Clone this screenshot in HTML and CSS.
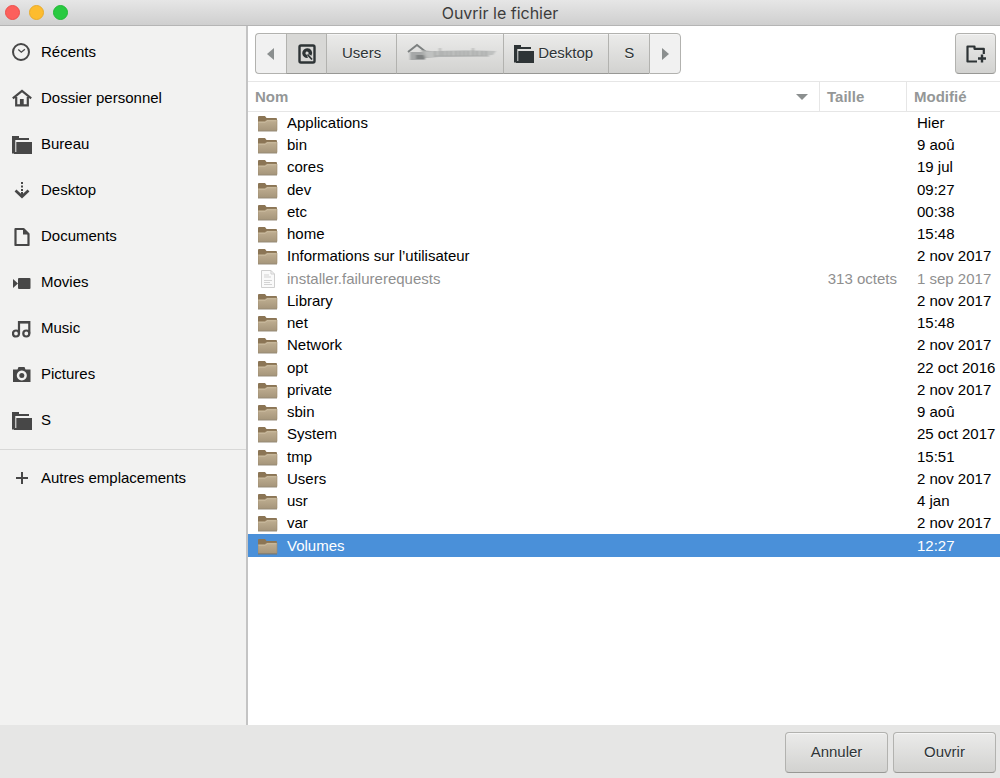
FILE: index.html
```html
<!DOCTYPE html>
<html lang="fr">
<head>
  <meta charset="UTF-8" />
  <meta name="viewport" content="width=device-width, initial-scale=1" />
  <title>Ouvrir le fichier</title>
  <link rel="stylesheet" href="styles.css">
</head>
<body>
  <svg class="sprite" aria-hidden="true">
    <defs>
      <linearGradient id="tan" x1="0" y1="0" x2="0" y2="1">
        <stop offset="0" stop-color="#c0af92" />
        <stop offset="1" stop-color="#a6967b" />
      </linearGradient>
      <filter id="smear" x="-10%" y="-20%" width="120%" height="140%">
        <feGaussianBlur stdDeviation="1 0.6" />
      </filter>
    </defs>
    <symbol id="i-clock" viewBox="0 0 20 20">
      <circle cx="9" cy="10" r="8" fill="none" stroke="currentColor" stroke-width="2" />
      <path d="M6.3 7.6l3 2.6 3.6-3" fill="none" stroke="currentColor" stroke-width="1.3" />
    </symbol>
    <symbol id="i-home" viewBox="0 0 20 20">
      <path d="M.8 10.4L10 3l9.200 7.400M4.200 9v8.300h11.600V9" fill="none" stroke="currentColor" stroke-width="2.200" />
      <path d="M7.900 11h3.800v6H7.900z" fill="currentColor" />
    </symbol>
    <symbol id="i-folder" viewBox="0 0 20 20">
      <path d="M0 2h7v2h10v2H3.300v13.500H0z" fill="currentColor" />
      <path d="M4.300 8H20v12H2v-2h2.300z" fill="currentColor" />
    </symbol>
    <symbol id="i-down" viewBox="0 0 20 20">
      <path d="M9 2h2v2H9zM9 5.500h2v2H9zM9 9h2v2H9z" fill="currentColor" />
      <path d="M3.500 10.600l6.500 6 6.500-6" fill="none" stroke="currentColor" stroke-width="2.700" />
      <path d="M9 12h2v4H9z" fill="currentColor" />
    </symbol>
    <symbol id="i-doc" viewBox="0 0 20 20">
      <path d="M3.500 3h8l5 5v11h-13z" fill="none" stroke="currentColor" stroke-width="2.200" stroke-linejoin="round" />
      <path d="M11 3v5.500h5.500z" fill="currentColor" />
    </symbol>
    <symbol id="i-movie" viewBox="0 0 20 20">
      <rect x="6" y="6" width="12.500" height="11" rx="1" fill="currentColor" />
      <path d="M1 7l5 4.500L1 16z" fill="currentColor" />
    </symbol>
    <symbol id="i-music" viewBox="0 0 20 20">
      <g fill="none" stroke="currentColor" stroke-width="2.200">
        <circle cx="4" cy="15.500" r="3" />
        <circle cx="14.300" cy="15.500" r="3" />
        <path d="M7 15.500V4h10.300v11.500" />
        <path d="M7 4.500h10.300" />
      </g>
    </symbol>
    <symbol id="i-camera" viewBox="0 0 20 20">
      <path fill-rule="evenodd" d="M1 5.500h4.500l1-2.500h6l1 2.500H18.500V18H1zM9.800 6.500a5 5 0 1 0 .01 0z" fill="currentColor" />
      <circle cx="9.800" cy="11.500" r="2.500" fill="currentColor" />
    </symbol>
    <symbol id="i-plus" viewBox="0 0 20 20">
      <path d="M10 4v12M4 10h12" stroke="currentColor" stroke-width="2" />
    </symbol>
    <symbol id="i-disk" viewBox="0 0 20 20">
      <rect x="2.500" y="1.500" width="15" height="17" rx="1.500" fill="none" stroke="currentColor" stroke-width="2.400" />
      <path d="M10 4.300a4.800 4.800 0 1 0 1 9.500l-1.300-3a1.600 1.600 0 1 1 1.700-.7l3 1.700A4.800 4.800 0 0 0 10 4.300z" fill="currentColor" />
      <path d="M10.500 10.500l4.500 5" stroke="currentColor" stroke-width="1.800" />
    </symbol>
    <symbol id="i-newfolder" viewBox="0 0 20 20">
      <path d="M11 17.500H1.500V2.500h7v2.300h9.300V10" fill="none" stroke="currentColor" stroke-width="2.200" stroke-linejoin="round" />
      <path d="M16 10.500v8M12 14.500h8" stroke="currentColor" stroke-width="2.400" />
    </symbol>
    <symbol id="i-dir" viewBox="0 0 20 18">
      <path d="M0 3q0-1 1-1h6l1.500 2H18q1 0 1 1v4H0z" fill="#8b7555" />
      <path d="M0 7.500h7L8.500 6H19v10.500H0z" fill="url(#tan)" stroke="#a08c6b" stroke-width=".6" />
      <path d="M.5 8.200h7L9 6.700h9.500" fill="none" stroke="#d0c1a6" stroke-width=".8" />
      <path d="M0 17h19" stroke="#7f725b" stroke-width=".8" />
    </symbol>
    <symbol id="i-file" viewBox="0 0 20 18">
      <path d="M3.500.5h9.500l3.500 3.500v13.500h-13z" fill="#fafafa" stroke="#cfcfcf" />
      <path d="M13 .5V4h3.500" fill="none" stroke="#cfcfcf" />
      <path d="M6 5h5M6 7h7M6 10.500h8M6 12.500h6M6 14.500h8" stroke="#d3d3d3" />
    </symbol>
  </svg>

  <div class="window">
    <header class="titlebar">
      <div class="lights">
        <button class="light close" aria-label="Fermer"></button>
        <button class="light minimize" aria-label="Réduire"></button>
        <button class="light maximize" aria-label="Agrandir"></button>
      </div>
      <h1>Ouvrir le fichier</h1>
    </header>

    <div class="content">
      <nav class="sidebar" aria-label="Raccourcis">
        <a href="#"><svg class="icon"><use href="#i-clock" /></svg>Récents</a>
        <a href="#"><svg class="icon"><use href="#i-home" /></svg>Dossier personnel</a>
        <a href="#"><svg class="icon"><use href="#i-folder" /></svg>Bureau</a>
        <a href="#"><svg class="icon"><use href="#i-down" /></svg>Desktop</a>
        <a href="#"><svg class="icon"><use href="#i-doc" /></svg>Documents</a>
        <a href="#"><svg class="icon"><use href="#i-movie" /></svg>Movies</a>
        <a href="#"><svg class="icon"><use href="#i-music" /></svg>Music</a>
        <a href="#"><svg class="icon"><use href="#i-camera" /></svg>Pictures</a>
        <a href="#"><svg class="icon"><use href="#i-folder" /></svg>S</a>
        <hr>
        <a href="#"><svg class="icon"><use href="#i-plus" /></svg>Autres emplacements</a>
      </nav>

      <main class="browser">
        <div class="toolbar">
          <div class="pathbar">
            <button class="arrow" aria-label="Précédent"><svg width="8" height="12"><path d="M7 0v12L0 6z" /></svg></button>
            <button class="active" aria-label="Disque"><svg class="icon"><use href="#i-disk" /></svg></button>
            <button>Users</button>
            <button class="home" aria-label="Dossier de départ">
              <svg width="92" height="20" viewBox="0 0 92 20">
                <path d="M1 9l9-7 9 7" fill="none" stroke="#7c8080" stroke-width="2" />
                <g filter="url(#smear)">
                  <path d="M3 9h15v8H3z" fill="#a6a8a8" />
                  <path d="M9 12h9v4H9z" fill="#7f8282" />
                  <path d="M14 7l18 2v5l-14 1z" fill="#b0b2b1" />
                  <path d="M18 9q30-3 71-1l-3 4q-30 2-66 2z" fill="#bfc1c0" />
                  <path d="M28 8v6M33 5v8M36 8v5M40 8v5M44 8v5M49 8v5M53 8v5M57 8v5M61 8v5M66 5v8M70 8v5M75 8v5M79 8v5" stroke="#9fa1a0" stroke-width="1.200" />
                  <path d="M28 13h54" stroke="#a8aaa9" />
                </g>
              </svg>
            </button>
            <button class="desktop"><svg class="icon"><use href="#i-folder" /></svg>Desktop</button>
            <button>S</button>
            <button class="arrow" aria-label="Suivant"><svg width="8" height="12"><path d="M1 0v12l7-6z" /></svg></button>
          </div>
          <button class="new-folder" aria-label="Créer un dossier"><svg class="icon"><use href="#i-newfolder" /></svg></button>
        </div>

        <table class="files">
          <colgroup>
            <col>
            <col class="col-size">
            <col class="col-date">
          </colgroup>
          <thead>
            <tr>
              <th scope="col" aria-sort="ascending"><div class="sort">Nom<svg width="12" height="6"><path d="M0 0h12L6 6z" /></svg></div></th>
              <th scope="col">Taille</th>
              <th scope="col">Modifié</th>
            </tr>
          </thead>
          <tbody>
            <tr><td><div class="name"><svg><use href="#i-dir" /></svg>Applications</div></td><td></td><td>Hier</td></tr>
            <tr><td><div class="name"><svg><use href="#i-dir" /></svg>bin</div></td><td></td><td>9 aoû</td></tr>
            <tr><td><div class="name"><svg><use href="#i-dir" /></svg>cores</div></td><td></td><td>19 jul</td></tr>
            <tr><td><div class="name"><svg><use href="#i-dir" /></svg>dev</div></td><td></td><td>09:27</td></tr>
            <tr><td><div class="name"><svg><use href="#i-dir" /></svg>etc</div></td><td></td><td>00:38</td></tr>
            <tr><td><div class="name"><svg><use href="#i-dir" /></svg>home</div></td><td></td><td>15:48</td></tr>
            <tr><td><div class="name"><svg><use href="#i-dir" /></svg>Informations sur l’utilisateur</div></td><td></td><td>2 nov 2017</td></tr>
            <tr class="disabled"><td><div class="name"><svg><use href="#i-file" /></svg>installer.failurerequests</div></td><td>313 octets</td><td>1 sep 2017</td></tr>
            <tr><td><div class="name"><svg><use href="#i-dir" /></svg>Library</div></td><td></td><td>2 nov 2017</td></tr>
            <tr><td><div class="name"><svg><use href="#i-dir" /></svg>net</div></td><td></td><td>15:48</td></tr>
            <tr><td><div class="name"><svg><use href="#i-dir" /></svg>Network</div></td><td></td><td>2 nov 2017</td></tr>
            <tr><td><div class="name"><svg><use href="#i-dir" /></svg>opt</div></td><td></td><td>22 oct 2016</td></tr>
            <tr><td><div class="name"><svg><use href="#i-dir" /></svg>private</div></td><td></td><td>2 nov 2017</td></tr>
            <tr><td><div class="name"><svg><use href="#i-dir" /></svg>sbin</div></td><td></td><td>9 aoû</td></tr>
            <tr><td><div class="name"><svg><use href="#i-dir" /></svg>System</div></td><td></td><td>25 oct 2017</td></tr>
            <tr><td><div class="name"><svg><use href="#i-dir" /></svg>tmp</div></td><td></td><td>15:51</td></tr>
            <tr><td><div class="name"><svg><use href="#i-dir" /></svg>Users</div></td><td></td><td>2 nov 2017</td></tr>
            <tr><td><div class="name"><svg><use href="#i-dir" /></svg>usr</div></td><td></td><td>4 jan</td></tr>
            <tr><td><div class="name"><svg><use href="#i-dir" /></svg>var</div></td><td></td><td>2 nov 2017</td></tr>
            <tr class="selected" aria-selected="true"><td><div class="name"><svg><use href="#i-dir" /></svg>Volumes</div></td><td></td><td>12:27</td></tr>
          </tbody>
        </table>
      </main>
    </div>

    <footer class="actions">
      <button>Annuler</button>
      <button>Ouvrir</button>
    </footer>
  </div>
</body>
</html>
```
FILE: styles.css
```css
* {
  box-sizing: border-box;
}

body {
  margin: 0;
  font-family: "Liberation Sans", Arial, sans-serif;
  font-size: 15px;
  line-height: 18px;
  color: #000;
}

/* hidden by size, gradients break with display: none */
.sprite {
  position: absolute;
  width: 0;
  height: 0;
}

.window {
  display: flex;
  flex-direction: column;
  min-height: 100vh;
  background: #fff;
}

/* Title bar */
.titlebar {
  display: grid;
  grid-template-columns: 1fr auto 1fr;
  align-items: center;
  height: 26px;
  padding: 0 5px;
  background: linear-gradient(#e6e6e6, #cfcfcf);
  border-bottom: 1px solid #b5b5b5;
}

.titlebar h1 {
  margin: 0;
  font-family: Inter, sans-serif;
  font-size: 16px;
  font-weight: 400;
  color: #3c3c3c;
}

.lights {
  display: flex;
  gap: 9px;
}

.light {
  width: 15px;
  height: 15px;
  padding: 0;
  border: 1px solid;
  border-radius: 50%;
}

.close    { background: #fc605c; border-color: #ec504c; }
.minimize { background: #fdbc2f; border-color: #e8ab2b; }
.maximize { background: #29ca41; border-color: #20b936; }

.content {
  display: flex;
  flex: 1;
}

.icon {
  width: 20px;
  height: 20px;
  flex: none;
}

/* Sidebar */
.sidebar {
  width: 248px;
  flex: none;
  padding-top: 3px;
  background: #f2f2f1;
  border-right: 2px solid #c4c4c4;
}

.sidebar a {
  display: flex;
  align-items: center;
  gap: 9px;
  height: 46px;
  padding: 0 12px;
  color: #000;
  text-decoration: none;
}

.sidebar .icon {
  color: #474747;
}

.sidebar hr {
  margin: 6px 0 5px;
  border: 0;
  border-top: 1px solid #d8d8d7;
}

/* Path bar */
.browser {
  flex: 1;
  min-width: 0;
}

.toolbar {
  display: flex;
  justify-content: space-between;
  padding: 7px 4px 7px 7px;
}

button {
  font: inherit;
  color: #2e3436;
}

.pathbar button,
.new-folder,
.actions button {
  display: flex;
  align-items: center;
  justify-content: center;
  height: 41px;
  padding: 0 15px 2px;
  background: linear-gradient(#ebebea, #d2d2d0);
  border: 1px solid #b2b2af;
  border-bottom-color: #989895;
  border-radius: 4px;
  box-shadow: inset 0 1px #f5f5f5;
  text-shadow: 0 1px #f4f4f4;
}

.pathbar {
  display: flex;
}

.pathbar button {
  border-right-width: 0;
  border-radius: 0;
}

.pathbar button:first-child {
  border-radius: 4px 0 0 4px;
}

.pathbar button:last-child {
  border-right-width: 1px;
  border-radius: 0 4px 4px 0;
}

.pathbar .arrow {
  padding: 0 11px;
  background: #f1f1f1;
  border-bottom-color: #b2b2af;
  fill: #8b8f8f;
}

.pathbar .active {
  padding: 0 9px 0 10px;
  background: #d8d8d6;
  box-shadow: none;
}

.pathbar .home {
  padding: 0 4px 2px 10px;
}

.pathbar .desktop {
  gap: 4px;
  padding: 0 15px 2px 10px;
}

.new-folder {
  width: 41px;
  padding: 0 10px;
}

/* File list */
.files {
  width: 100%;
  table-layout: fixed;
  border-collapse: separate;
  border-spacing: 0;
}

.col-size { width: 87px; }
.col-date { width: 94px; }

.files th {
  height: 31px;
  padding: 0 7px;
  border: solid #e6e6e6;
  border-width: 1px 0 1px 1px;
  color: #949797;
  text-align: left;
}

.files th:first-child {
  border-left: 0;
}

.sort {
  display: flex;
  align-items: center;
  justify-content: space-between;
  padding-right: 4px;
  fill: #8b8f8f;
}

.files td {
  height: 22px;
  padding: 0 0 0 11px;
  white-space: nowrap;
}

.files tr:nth-child(4n) td {
  height: 23px;
}

.files td:nth-child(2) {
  padding: 0 9px 0 0;
  text-align: right;
}

.name {
  display: flex;
  align-items: center;
  gap: 9px;
}

.files td:first-child {
  padding-left: 10px;
}

.name svg {
  width: 20px;
  height: 18px;
}

.disabled td {
  color: #8f8f8f;
}

.selected td {
  background: #4a90d9;
  color: #fff;
}

/* Bottom buttons */
.actions {
  display: flex;
  justify-content: flex-end;
  gap: 5px;
  padding: 7px 4px 5px;
  background: #e6e6e5;
}

.actions button {
  min-width: 103px;
}
```
